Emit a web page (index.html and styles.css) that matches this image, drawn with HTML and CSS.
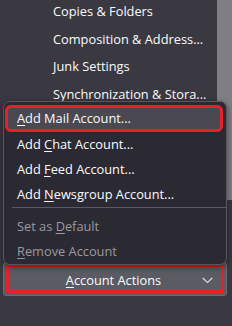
FILE: index.html
```html
<!DOCTYPE html>
<html>
<head>
<meta charset="utf-8">
<link rel="stylesheet" href="styles.css">
</head>
<body>
<div class="pane">
  <div class="tree">
    <ul class="rows">
      <li class="row">Copies &amp; Folders</li>
      <li class="row">Composition &amp; Address...</li>
      <li class="row">Junk Settings</li>
      <li class="row">Synchronization &amp; Stora...</li>
    </ul>
    <div class="scrollbar"></div>
  </div>
  <div class="actions">
    <button class="btn"><span class="btn-label"><u>A</u>ccount Actions</span>
      <svg class="chev" width="11" height="7" viewBox="0 0 11 7"><path d="M0.8 1 L5.5 5.6 L10.2 1" fill="none" stroke="#e4e4ea" stroke-width="1.1"/></svg>
    </button>
  </div>
</div>
<div class="menu">
  <div class="item active"><u>A</u>dd Mail Account...</div>
  <div class="item">Add <u>C</u>hat Account...</div>
  <div class="item">Add <u>F</u>eed Account...</div>
  <div class="item">Add <u>N</u>ewsgroup Account...</div>
  <div class="sep"></div>
  <div class="item disabled">Set as <u>D</u>efault</div>
  <div class="item disabled"><u>R</u>emove Account</div>
</div>
</body>
</html>
```
FILE: styles.css
```css
html, body {
  margin: 0;
  padding: 0;
}
body {
  width: 232px;
  height: 326px;
  overflow: hidden;
  background: #3a3941;
  font-family: "Open Sans", "Noto Sans", sans-serif;
  font-size: 12.8px;
  color: #fbfbfe;
  position: relative;
}
u {
  text-decoration-thickness: 1px;
  text-underline-offset: 2px;
}
.pane {
  display: flex;
  flex-direction: column;
}
.tree {
  display: flex;
  height: 262px;
}
.rows {
  list-style: none;
  margin: 0;
  padding: 0;
  flex: 1;
}
.row {
  height: 27.7px;
  line-height: 22px;
  padding-left: 53px;
  white-space: nowrap;
}
.scrollbar {
  width: 15px;
  height: 200px;
  background: #7e7e84;
}
.actions {
  padding: 0 5px 0 3px;
}
.btn {
  width: 224px;
  height: 34px;
  margin: 0;
  padding: 0;
  border: none;
  border-radius: 4px;
  background: #5b5b64;
  color: #fbfbfe;
  font: inherit;
  display: flex;
  align-items: center;
  justify-content: center;
  position: relative;
  outline: 3px solid #e3222b;
  outline-offset: -6px;
  box-shadow: inset 0 0 0 1px #6a6a72;
}
.btn-label {
  margin-left: -3px;
  padding-top: 1px;
}
.chev {
  position: absolute;
  right: 14px;
  top: 15px;
}
.menu {
  position: absolute;
  left: 3px;
  top: 101px;
  width: 222px;
  padding: 3px 0 1px;
  background: #2b2a33;
  border: 1px solid #58575f;
  border-radius: 7px;
  box-shadow: 0 2px 6px rgba(0, 0, 0, 0.5);
}
.item {
  height: 25px;
  line-height: 26px;
  margin: 0 3px 0 1px;
  padding-left: 12px;
  white-space: nowrap;
  border-radius: 6px;
}
.item.active {
  height: 27px;
  line-height: 26px;
  margin-bottom: -1px;
  background: #4a4951;
  outline: 3px solid #e3222b;
  outline-offset: -3px;
}
.item.disabled {
  color: #9a99a1;
}
.sep {
  height: 1px;
  background: #5c5b63;
  margin: 1px 0 5px 8px;
}
```
